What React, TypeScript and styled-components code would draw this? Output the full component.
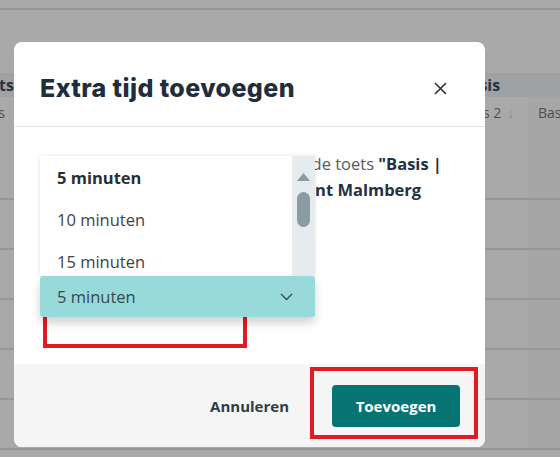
import React from "react";
import styled, { createGlobalStyle } from "styled-components";

const GlobalStyle = createGlobalStyle`
  html, body {
    margin: 0;
    padding: 0;
  }
  body {
    background: #a9a9a9;
    font-family: "Open Sans", "Noto Sans", sans-serif;
    overflow: hidden;
  }
`;

const Page = styled.div`
  position: relative;
  width: 560px;
  height: 457px;
  overflow: hidden;
  background: #a9a9a9;
`;

/* dimmed page behind the dialog */

const TopBar = styled.div`
  height: 8px;
  border-bottom: 2px solid #959595;
`;

const Table = styled.div`
  margin-top: 63px;
  display: grid;
  grid-template-columns: 14px 430px 84px 1fr;
`;

const GroupCell = styled.div<{ $span?: number; $end?: boolean }>`
  grid-column: span ${(p) => p.$span ?? 1};
  height: 24px;
  background: #9ea2a4;
  display: flex;
  align-items: center;
  justify-content: ${(p) => (p.$end ? "flex-end" : "flex-start")};
  padding-left: ${(p) => (p.$end ? 0 : 15)}px;
  overflow: hidden;
  white-space: nowrap;
  font-size: 16px;
  font-weight: 700;
  color: #2a343d;
`;

const HeadCell = styled.div<{ $end?: boolean; $dark?: boolean; $pad?: number }>`
  height: 30px;
  display: flex;
  align-items: center;
  justify-content: ${(p) => (p.$end ? "flex-end" : "flex-start")};
  padding-left: ${(p) => (p.$end ? 0 : p.$pad ?? 12)}px;
  padding-right: ${(p) => (p.$end ? 9 : 0)}px;
  overflow: hidden;
  white-space: nowrap;
  font-size: 14px;
  color: #4d4f51;
  background: ${(p) => (p.$dark ? "#a6a6a6" : "transparent")};
`;

const SortArrow = styled.span`
  margin-left: 6px;
  color: #8a8a8a;
`;

const Row = styled.div<{ $height: number }>`
  grid-column: 1 / -1;
  height: ${(p) => p.$height}px;
  border-bottom: 2px solid #979797;
  box-sizing: border-box;
  background: linear-gradient(to right, transparent 528px, #a6a6a6 528px);
`;

/* dialog */

const Modal = styled.div`
  position: absolute;
  left: 14px;
  top: 42px;
  width: 471px;
  height: 405px;
  background: #ffffff;
  border-radius: 8px;
  overflow: hidden;
  display: flex;
  flex-direction: column;
`;

const Header = styled.div`
  height: 85px;
  box-sizing: border-box;
  padding: 8px 38px 0 26px;
  border-bottom: 1px solid #e4e4e4;
  display: flex;
  align-items: center;
  justify-content: space-between;
`;

const Title = styled.h2`
  margin: 0;
  font-family: Inter, "Noto Sans", sans-serif;
  font-size: 25px;
  font-weight: 800;
  letter-spacing: 0.4px;
  color: #1f2e3c;
`;

const CloseButton = styled.button`
  width: 13px;
  height: 13px;
  padding: 0;
  border: 0;
  background: none;
  display: flex;
  cursor: pointer;
`;

const Body = styled.div`
  flex: 1;
  padding: 24px 26px;
`;

const Intro = styled.p`
  margin: 0;
  font-size: 16.5px;
  line-height: 26px;
  color: #595959;

  strong {
    color: #233240;
    font-weight: 700;
  }
`;

const Field = styled.div`
  position: relative;
  width: 275px;
  margin-top: 47px;
`;

const SelectBox = styled.div`
  position: relative;
  z-index: 2;
  height: 41px;
  box-sizing: border-box;
  padding: 0 22px 0 17px;
  border-radius: 3px;
  background: #98dada;
  box-shadow: 0 6px 10px rgba(0, 0, 0, 0.18);
  display: flex;
  align-items: center;
  justify-content: space-between;
  font-size: 16.5px;
  color: #36474f;
`;

const OptionList = styled.div`
  position: absolute;
  left: 0;
  bottom: 100%;
  z-index: 1;
  width: 275px;
  height: 120px;
  background: #ffffff;
  box-shadow: 0 0 4px rgba(0, 0, 0, 0.12);
  display: flex;
  overflow: hidden;
`;

const Options = styled.div`
  flex: 1;
`;

const Option = styled.div<{ $selected?: boolean }>`
  height: 42px;
  padding-left: 17px;
  display: flex;
  align-items: center;
  font-size: 16.5px;
  font-weight: ${(p) => (p.$selected ? 700 : 400)};
  color: ${(p) => (p.$selected ? "#2a2f33" : "#3d4347")};
`;

const Scrollbar = styled.div`
  width: 23px;
  background: #e6ebee;
  display: flex;
  flex-direction: column;
  align-items: center;
  padding-top: 17px;
  box-sizing: border-box;
`;

const Thumb = styled.div`
  width: 13px;
  height: 35px;
  margin-top: 11px;
  border-radius: 7px;
  background: #8b9ba3;
`;

const Footer = styled.div`
  height: 83px;
  box-sizing: border-box;
  padding: 0 25px;
  background: #f5f5f5;
  display: flex;
  align-items: center;
  justify-content: flex-end;
`;

const TextButton = styled.button`
  margin-right: 43px;
  padding: 0;
  border: 0;
  background: none;
  font-family: "Open Sans", sans-serif;
  font-size: 15px;
  font-weight: 700;
  color: #2f3b46;
  cursor: pointer;
`;

const PrimaryButton = styled.button`
  width: 128px;
  height: 42px;
  border: 0;
  border-radius: 4px;
  background: #077474;
  font-family: "Open Sans", sans-serif;
  font-size: 15px;
  font-weight: 700;
  color: #ffffff;
  cursor: pointer;
`;

/* red markers drawn on the screenshot */

const Marker = styled.div`
  position: absolute;
  box-sizing: border-box;
  border: 4px solid #e11b24;
`;

export default function App() {
  return (
    <Page>
      <GlobalStyle />
      <TopBar />
      <Table>
        <GroupCell $end>Toets</GroupCell>
        <GroupCell />
        <GroupCell $span={2}>Basis</GroupCell>
        <HeadCell $end>Status</HeadCell>
        <HeadCell />
        <HeadCell>
          Basis 2<SortArrow>↓</SortArrow>
        </HeadCell>
        <HeadCell $dark $pad={10}>Basis 3</HeadCell>
        <Row $height={73} />
        <Row $height={50} />
        <Row $height={50} />
        <Row $height={50} />
        <Row $height={50} />
        <Row $height={50} />
      </Table>

      <Modal role="dialog">
        <Header>
          <Title>Extra tijd toevoegen</Title>
          <CloseButton aria-label="Sluiten">
            <svg width="13" height="13" viewBox="0 0 13 13">
              <path d="M1 1L12 12M12 1L1 12" stroke="#2b2f33" strokeWidth="1.6" />
            </svg>
          </CloseButton>
        </Header>
        <Body>
          <Intro>
            Hoeveel extra tijd wil je geven voor de toets{" "}
            <strong>"Basis | Leesvaardigheid M6 - Toetsmoment Malmberg 2023-2024".</strong>
          </Intro>
          <Field>
            <OptionList>
              <Options>
                <Option $selected>5 minuten</Option>
                <Option>10 minuten</Option>
                <Option>15 minuten</Option>
              </Options>
              <Scrollbar>
                <svg width="13" height="8" viewBox="0 0 13 8">
                  <path d="M6.5 0L13 8H0Z" fill="#8b9ba3" />
                </svg>
                <Thumb />
              </Scrollbar>
            </OptionList>
            <SelectBox>
              5 minuten
              <svg width="13" height="8" viewBox="0 0 13 8">
                <path d="M1 1L6.5 6.5L12 1" fill="none" stroke="#36474f" strokeWidth="1.3" />
              </svg>
            </SelectBox>
          </Field>
        </Body>
        <Footer>
          <TextButton>Annuleren</TextButton>
          <PrimaryButton>Toevoegen</PrimaryButton>
        </Footer>
      </Modal>

      <Marker style={{ left: 43, top: 282, width: 204, height: 66 }} />
      <Marker style={{ left: 310, top: 367, width: 168, height: 72 }} />
    </Page>
  );
}
